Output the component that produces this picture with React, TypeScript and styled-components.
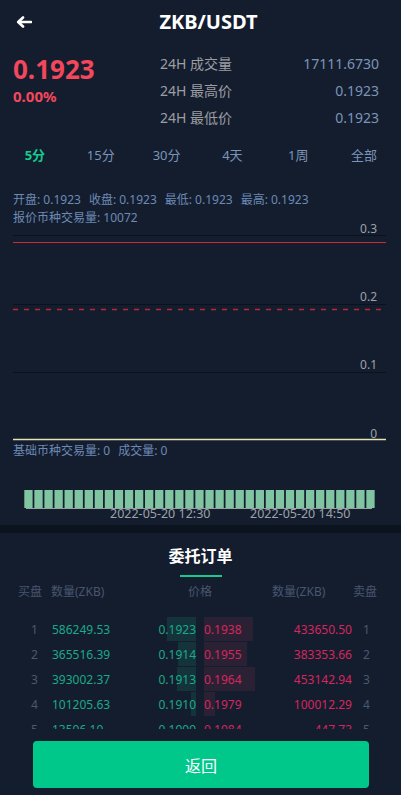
import styled, { createGlobalStyle } from 'styled-components'

const GlobalStyle = createGlobalStyle`
  html, body {
    margin: 0;
    padding: 0;
    background: #141d2e;
  }
  body {
    font-family: "Noto Sans", "Noto Sans CJK SC", sans-serif;
  }
  * {
    box-sizing: border-box;
  }
`

const Page = styled.div`
  width: 401px;
  height: 795px;
  overflow: hidden;
  display: flex;
  flex-direction: column;
  background: #141d2e;
`

const Header = styled.header`
  height: 44px;
  display: grid;
  grid-template-columns: 1fr auto 1fr;
  align-items: center;
  padding-left: 16px;
`

const BackButton = styled.div`
  width: 16px;
  height: 12px;
  display: flex;
  align-items: center;
`

const Title = styled.h1`
  margin: 0;
  color: #ffffff;
  font-size: 20px;
  font-weight: 700;
  line-height: 24px;
`

const Ticker = styled.section`
  display: flex;
  padding: 6px 22px 0 13px;
`

const PriceBlock = styled.div`
  flex: 1;
  padding-top: 5px;
`

const LastPrice = styled.div`
  color: #f3475b;
  font-size: 26px;
  font-weight: 700;
  line-height: 28px;
`

const Change = styled.div`
  color: #f3475b;
  font-size: 15px;
  font-weight: 700;
  line-height: 18px;
  margin-top: 4px;
`

const Stats = styled.div`
  width: 219px;
`

const StatRow = styled.div`
  display: flex;
  justify-content: space-between;
  font-size: 14px;
  line-height: 27px;
`

const StatLabel = styled.span`
  color: #9c9ea3;
`

const StatValue = styled.span`
  color: #7b95b8;
`

const Tabs = styled.nav`
  display: flex;
  height: 46px;
  align-items: center;
  padding: 0 4px 0 2px;
`

const Tab = styled.div<{ $active?: boolean }>`
  flex: 1;
  text-align: center;
  font-size: 13px;
  color: ${p => (p.$active ? '#17c98f' : '#7b95b8')};
  font-weight: ${p => (p.$active ? 700 : 400)};
`

const Legend = styled.div`
  padding: 14px 13px 0;
  color: #6c8ab5;
  font-size: 12px;
  line-height: 18px;
`

const LegendLine = styled.div`
  display: flex;
  gap: 8px;
`

const ChartSvg = styled.svg`
  display: block;
  margin-left: 13px;
  overflow: visible;
`

const VolumeLegend = styled.div`
  margin-top: -2px;
  padding: 0 13px;
  color: #6c8ab5;
  font-size: 12px;
  line-height: 14px;
  display: flex;
  gap: 8px;
`

const VolumeSvg = styled.svg`
  display: block;
`

const Divider = styled.div`
  height: 8px;
  background: #0b131e;
`

const OrderSection = styled.section`
  display: flex;
  flex-direction: column;
  flex: 1;
`

const SectionTitle = styled.h2`
  margin: 13px 0 0;
  text-align: center;
  color: #ffffff;
  font-size: 16px;
  font-weight: 700;
  line-height: 20px;
`

const Underline = styled.div`
  width: 42px;
  height: 2px;
  margin: 9px auto 0;
  background: #17c98f;
`

const ColumnHeader = styled.div`
  display: grid;
  grid-template-columns: 33px 137px 84px 81px auto;
  padding-left: 18px;
  margin-top: 7px;
  color: #48566f;
  font-size: 12px;
  line-height: 16px;
`

const OrderList = styled.div`
  margin-top: 17px;
  height: 112px;
  overflow: hidden;
`

const OrderRow = styled.div`
  display: flex;
  align-items: center;
  height: 25px;
  padding-left: 31px;
  font-size: 12px;
`

const IndexCell = styled.span<{ $right?: boolean }>`
  width: ${p => (p.$right ? '14px' : '21px')};
  margin-left: ${p => (p.$right ? '11px' : '0')};
  color: #4c586c;
`

const QtyCell = styled.span<{ $side: 'buy' | 'sell' }>`
  width: ${p => (p.$side === 'buy' ? '84px' : '88px')};
  text-align: ${p => (p.$side === 'buy' ? 'left' : 'right')};
  color: ${p => (p.$side === 'buy' ? '#1ba98a' : '#d6265d')};
`

const PriceCell = styled.span<{ $side: 'buy' | 'sell' }>`
  position: relative;
  width: 60px;
  height: 25px;
  line-height: 25px;
  margin-left: ${p => (p.$side === 'sell' ? '8px' : '0')};
  text-align: ${p => (p.$side === 'buy' ? 'right' : 'left')};
  color: ${p => (p.$side === 'buy' ? '#1ba98a' : '#d6265d')};
`

const DepthBar = styled.span<{ $side: 'buy' | 'sell' }>`
  position: absolute;
  top: 0;
  height: 24px;
  ${p => (p.$side === 'buy' ? 'right: 0;' : 'left: 0;')}
  background: ${p => (p.$side === 'buy' ? '#15333a' : '#2a2234')};
`

const PriceText = styled.span`
  position: relative;
`

const BackAction = styled.button`
  margin: 12px 32px 0 33px;
  height: 47px;
  border: none;
  border-radius: 4px;
  background: #00c88b;
  color: #ffffff;
  font-family: "Noto Sans", "Noto Sans CJK SC", sans-serif;
  font-size: 16px;
`

const tabs = ['5分', '15分', '30分', '4天', '1周', '全部']

const orders = [
  { bq: '586249.53', bp: '0.1923', bd: 29, sp: '0.1938', sq: '433650.50', sd: 49 },
  { bq: '365516.39', bp: '0.1914', bd: 18, sp: '0.1955', sq: '383353.66', sd: 43 },
  { bq: '393002.37', bp: '0.1913', bd: 19, sp: '0.1964', sq: '453142.94', sd: 51 },
  { bq: '101205.63', bp: '0.1910', bd: 5, sp: '0.1979', sq: '100012.29', sd: 11 },
  { bq: '13506.10', bp: '0.1909', bd: 0, sp: '0.1984', sq: '447.73', sd: 0 },
]

const bars = Array.from({ length: 35 }, (_, i) => 24.3 + i * 10.06)

export default function App() {
  return (
    <Page>
      <GlobalStyle />
      <Header>
        <BackButton>
          <svg width="16" height="12" viewBox="0 0 16 12">
            <path d="M15 6H3M7 1.5L2.2 6L7 10.5" fill="none" stroke="#fff" strokeWidth="2.6" strokeLinecap="round" strokeLinejoin="round" />
          </svg>
        </BackButton>
        <Title>ZKB/USDT</Title>
        <span />
      </Header>

      <Ticker>
        <PriceBlock>
          <LastPrice>0.1923</LastPrice>
          <Change>0.00%</Change>
        </PriceBlock>
        <Stats>
          <StatRow><StatLabel>24H 成交量</StatLabel><StatValue>17111.6730</StatValue></StatRow>
          <StatRow><StatLabel>24H 最高价</StatLabel><StatValue>0.1923</StatValue></StatRow>
          <StatRow><StatLabel>24H 最低价</StatLabel><StatValue>0.1923</StatValue></StatRow>
        </Stats>
      </Ticker>

      <Tabs>
        {tabs.map((t, i) => (
          <Tab key={t} $active={i === 0}>{t}</Tab>
        ))}
      </Tabs>

      <Legend>
        <LegendLine>
          <span>开盘: 0.1923</span>
          <span>收盘: 0.1923</span>
          <span>最低: 0.1923</span>
          <span>最高: 0.1923</span>
        </LegendLine>
        <div>报价币种交易量: 10072</div>
      </Legend>

      <ChartSvg width="373" height="219" viewBox="0 0 373 219">
        <g stroke="#0b121d" strokeWidth="1">
          <line x1="0" y1="8.5" x2="373" y2="8.5" />
          <line x1="0" y1="77.5" x2="373" y2="77.5" />
          <line x1="0" y1="145.5" x2="373" y2="145.5" />
        </g>
        <line x1="0" y1="15.5" x2="373" y2="15.5" stroke="#cf2a33" strokeWidth="1.2" />
        <line x1="0" y1="82.5" x2="373" y2="82.5" stroke="#b9283a" strokeWidth="1.5" strokeDasharray="5 6" />
        <line x1="0" y1="212.5" x2="373" y2="212.5" stroke="#e4e4b4" strokeWidth="1.5" />
        <g fill="#9ca2aa" fontSize="12" textAnchor="end" fontFamily="Noto Sans, sans-serif">
          <text x="364" y="6">0.3</text>
          <text x="364" y="74">0.2</text>
          <text x="364" y="142">0.1</text>
          <text x="364" y="211">0</text>
        </g>
      </ChartSvg>

      <VolumeLegend>
        <span>基础币种交易量: 0</span>
        <span>成交量: 0</span>
      </VolumeLegend>

      <VolumeSvg width="401" height="67" viewBox="0 0 401 67">
        {bars.map(x => (
          <rect key={x} x={x} y="32" width="8.3" height="18" fill="#80c4a2" />
        ))}
        <rect x="26" y="50" width="346" height="1" fill="#98a3a2" />
        <g fill="#9ca2aa" fontSize="12.5" fontFamily="Noto Sans, sans-serif">
          <text x="110" y="60">2022-05-20 12:30</text>
          <text x="250" y="60">2022-05-20 14:50</text>
        </g>
      </VolumeSvg>

      <Divider />

      <OrderSection>
        <SectionTitle>委托订单</SectionTitle>
        <Underline />
        <ColumnHeader>
          <span>买盘</span>
          <span>数量(ZKB)</span>
          <span>价格</span>
          <span>数量(ZKB)</span>
          <span>卖盘</span>
        </ColumnHeader>
        <OrderList>
          {orders.map((o, i) => (
            <OrderRow key={i}>
              <IndexCell>{i + 1}</IndexCell>
              <QtyCell $side="buy">{o.bq}</QtyCell>
              <PriceCell $side="buy">
                <DepthBar $side="buy" style={{ width: o.bd }} />
                <PriceText>{o.bp}</PriceText>
              </PriceCell>
              <PriceCell $side="sell">
                <DepthBar $side="sell" style={{ width: o.sd }} />
                <PriceText>{o.sp}</PriceText>
              </PriceCell>
              <QtyCell $side="sell">{o.sq}</QtyCell>
              <IndexCell $right>{i + 1}</IndexCell>
            </OrderRow>
          ))}
        </OrderList>
        <BackAction>返回</BackAction>
      </OrderSection>
    </Page>
  )
}
